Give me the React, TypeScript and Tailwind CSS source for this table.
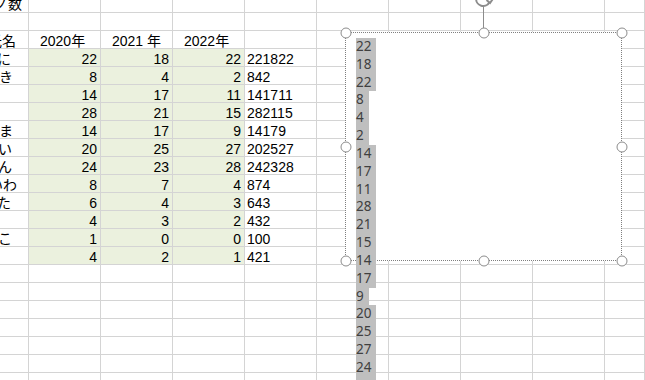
import React from "react";

// sheet values per row: 2020, 2021, 2022
const rows: number[][] = [
  [22, 18, 22],
  [8, 4, 2],
  [14, 17, 11],
  [28, 21, 15],
  [14, 17, 9],
  [20, 25, 27],
  [24, 23, 28],
  [8, 7, 4],
  [6, 4, 3],
  [4, 3, 2],
  [1, 0, 0],
  [4, 2, 1],
];

// column A is scrolled off to the left, only the tail of each name shows
const names: { text: string; cls: string }[] = [
  { text: "に", cls: "-ml-[3px]" },
  { text: "き", cls: "-ml-[1px]" },
  { text: "", cls: "" },
  { text: "", cls: "" },
  { text: "ま", cls: "-ml-[1px]" },
  { text: "い", cls: "-ml-[2px]" },
  { text: "ん", cls: "-ml-[2px]" },
  { text: "いわ", cls: "-ml-[11px]" },
  { text: "た", cls: "-ml-[3px]" },
  { text: "", cls: "" },
  { text: "こ", cls: "-ml-[2px]" },
  { text: "", cls: "" },
];

const EMPTY_ROWS = 8;
const cell = "h-[18px] border-r border-b border-[#d4d4d4] overflow-hidden whitespace-nowrap leading-[20px]";

const Row: React.FC<{ cells: React.ReactNode[] }> = ({ cells }) => <>{cells}</>;

const blankRow = (key: string) => (
  <Row
    key={key}
    cells={Array.from({ length: 10 }, (_, i) => (
      <div key={i} className="h-[18px] border-r border-b border-[#d4d4d4]" />
    ))}
  />
);

const Handle: React.FC<{ className: string }> = ({ className }) => (
  <div
    className={`absolute w-[11px] h-[11px] -translate-x-1/2 -translate-y-1/2 rounded-full border-[1.5px] border-[#8c8c8c] bg-white z-20 ${className}`}
  />
);

export default function App() {
  const boxLines = rows.flat();

  return (
    <div className="relative w-[645px] h-[380px] overflow-hidden bg-white text-[14px] text-black font-['Liberation_Sans','Noto_Sans_CJK_JP',sans-serif]">
      {/* sheet grid */}
      <div className="grid grid-cols-[29px_repeat(8,72px)_1fr]">
        {/* top row, half scrolled */}
        <div className="h-[13px] border-r border-b border-[#d4d4d4] overflow-hidden whitespace-nowrap leading-[8px]">
          <span className="-ml-[6px] inline-block">ノ数</span>
        </div>
        {Array.from({ length: 9 }, (_, i) => (
          <div key={i} className="h-[13px] border-r border-b border-[#d4d4d4]" />
        ))}

        {blankRow("blank1")}

        {/* header */}
        <div className={cell}>
          <span className="-ml-[12px] inline-block">氏名</span>
        </div>
        <div className={`${cell} pl-[11px]`}>2020年</div>
        <div className={`${cell} pl-[11px]`}>2021 年</div>
        <div className={`${cell} pl-[11px]`}>2022年</div>
        {Array.from({ length: 6 }, (_, i) => (
          <div key={i} className={cell} />
        ))}

        {rows.map((r, ri) => (
          <Row
            key={ri}
            cells={[
              <div key="a" className={cell}>
                <span className={`inline-block ${names[ri].cls}`}>{names[ri].text}</span>
              </div>,
              ...r.map((v, vi) => (
                <div key={vi} className={`${cell} bg-[#ebf1de] text-right pr-[3px]`}>
                  {v}
                </div>
              )),
              <div key="e" className={`${cell} pl-[2px]`}>
                {r.join("")}
              </div>,
              ...Array.from({ length: 5 }, (_, i) => <div key={`x${i}`} className={cell} />),
            ]}
          />
        ))}

        {Array.from({ length: EMPTY_ROWS }, (_, i) => blankRow(`tail${i}`))}
      </div>

      {/* rotate handle */}
      <svg
        className="absolute left-[471px] -top-[12px] w-[24px] h-[24px] z-20"
        viewBox="0 0 24 24"
        fill="none"
        stroke="#8c8c8c"
        strokeWidth="2"
      >
        <path d="M12 4 A7 7 0 1 0 18.5 14" />
        <path d="M15.5 12 L19 15 L21.5 11.5" />
      </svg>
      <div className="absolute left-[483px] top-[6px] w-px h-[22px] bg-[#8c8c8c] z-20" />

      {/* text box, its text runs past the bottom edge */}
      <div className="absolute left-[345px] top-[32px] w-[277px] h-[229px] border border-dotted border-[#7f7f7f] bg-white z-10">
        <div className="pt-[5px] pl-[10px] text-[13.5px] leading-[17.83px] text-[#404040] font-['Liberation_Sans_Narrow','Noto_Sans',sans-serif]">
          {boxLines.map((v, i) => (
            <div key={i} className="w-fit bg-[#bfbfbf] pr-[5px]">
              {v}
            </div>
          ))}
        </div>
      </div>

      <Handle className="left-[345.5px] top-[32.5px]" />
      <Handle className="left-[483.5px] top-[32.5px]" />
      <Handle className="left-[621.5px] top-[32.5px]" />
      <Handle className="left-[345.5px] top-[146.5px]" />
      <Handle className="left-[621.5px] top-[146.5px]" />
      <Handle className="left-[345.5px] top-[260.5px]" />
      <Handle className="left-[483.5px] top-[260.5px]" />
      <Handle className="left-[621.5px] top-[260.5px]" />
    </div>
  );
}
